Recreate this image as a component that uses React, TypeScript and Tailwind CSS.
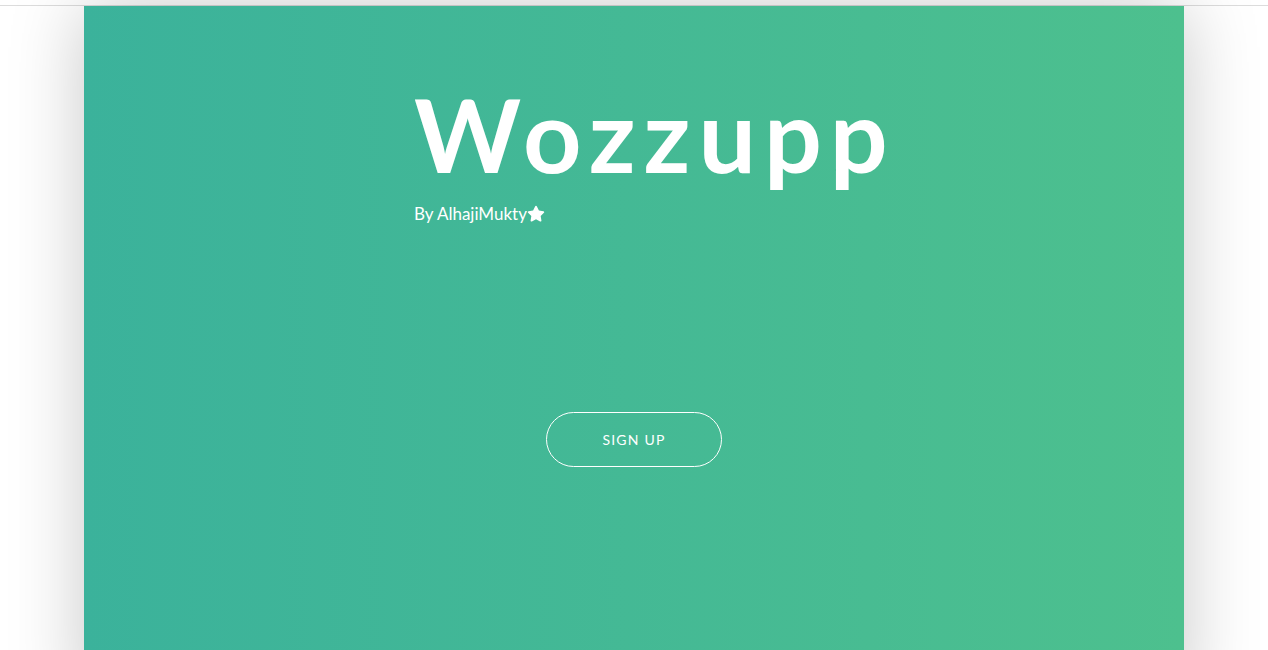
import React from "react";

function Star() {
  return (
    <svg viewBox="0 0 24 24" className="w-[20px] h-[20px] -ml-[1px]" fill="white">
      <path d="M12 2.2c.5 0 .9.3 1.1.7l2.4 4.9 5.4.8c1 .1 1.3 1.3.6 2l-3.9 3.8.9 5.4c.2.9-.8 1.6-1.6 1.2L12 18.4 7.1 21c-.8.4-1.8-.3-1.6-1.2l.9-5.4-3.9-3.8c-.7-.7-.3-1.9.6-2l5.4-.8 2.4-4.9c.2-.4.6-.7 1.1-.7z" />
    </svg>
  );
}

export default function App() {
  return (
    <div className="min-h-screen bg-white overflow-hidden font-['Lato',sans-serif]">
      <div className="h-[6px] border-b border-[#dcdcdc] bg-white" />
      <main className="mx-auto w-[1100px] min-h-[700px] bg-linear-to-r from-[#3bb29b] to-[#4dc08e] shadow-[0_0_70px_rgba(0,0,0,0.22)] text-white">
        <div className="mx-auto w-[440px] pt-[72px]">
          <h1 className="whitespace-nowrap text-[102px] leading-[1.1] font-bold tracking-[8px]">
            Wozzupp
          </h1>
          <p className="mt-[11px] flex items-center text-[17px]">
            By AlhajiMukty
            <Star />
          </p>
        </div>
        <div className="flex justify-center pt-[185px]">
          <button className="w-[176px] h-[55px] rounded-full border border-white text-[14px] tracking-[1.2px]">
            SIGN UP
          </button>
        </div>
      </main>
    </div>
  );
}
